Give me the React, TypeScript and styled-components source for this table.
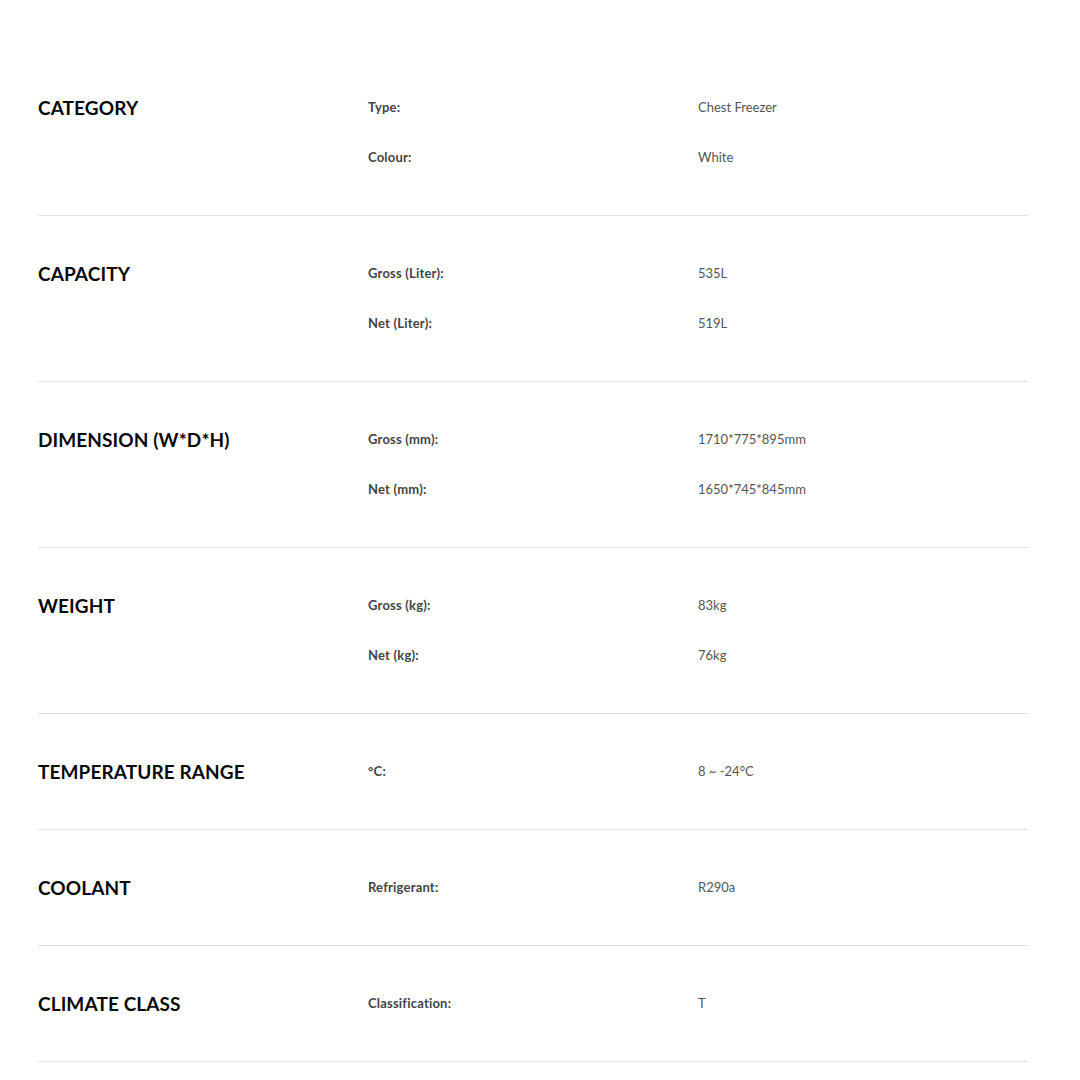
import React from "react";
import styled, { createGlobalStyle } from "styled-components";

const GlobalStyle = createGlobalStyle`
  html, body {
    margin: 0;
    padding: 0;
    background: #ffffff;
  }
  body {
    font-family: Lato, "Open Sans", sans-serif;
  }
`;

type Spec = { label: string; value: string };
type Group = { title: string; specs: Spec[] };

const groups: Group[] = [
  {
    title: "CATEGORY",
    specs: [
      { label: "Type:", value: "Chest Freezer" },
      { label: "Colour:", value: "White" },
    ],
  },
  {
    title: "CAPACITY",
    specs: [
      { label: "Gross (Liter):", value: "535L" },
      { label: "Net (Liter):", value: "519L" },
    ],
  },
  {
    title: "DIMENSION (W*D*H)",
    specs: [
      { label: "Gross (mm):", value: "1710*775*895mm" },
      { label: "Net (mm):", value: "1650*745*845mm" },
    ],
  },
  {
    title: "WEIGHT",
    specs: [
      { label: "Gross (kg):", value: "83kg" },
      { label: "Net (kg):", value: "76kg" },
    ],
  },
  {
    title: "TEMPERATURE RANGE",
    specs: [{ label: "°C:", value: "8 ~ -24°C" }],
  },
  {
    title: "COOLANT",
    specs: [{ label: "Refrigerant:", value: "R290a" }],
  },
  {
    title: "CLIMATE CLASS",
    specs: [{ label: "Classification:", value: "T" }],
  },
];

const App = () => {
  return (
    <Page>
      <GlobalStyle />
      <SpecTable>
        {groups.map((g) => (
          <Section key={g.title}>
            <SectionTitle>{g.title}</SectionTitle>
            <SpecList>
              {g.specs.map((s) => (
                <SpecRow key={s.label}>
                  <SpecLabel>{s.label}</SpecLabel>
                  <SpecValue>{s.value}</SpecValue>
                </SpecRow>
              ))}
            </SpecList>
          </Section>
        ))}
      </SpecTable>
    </Page>
  );
};

export default App;

const Page = styled.div`
  width: 1080px;
  padding: 50px 0 0 38px;
  box-sizing: border-box;
`;

const SpecTable = styled.div`
  width: 990px;
  display: flex;
  flex-direction: column;
`;

const Section = styled.div`
  display: grid;
  grid-template-columns: 330px 1fr;
  padding: 32px 0 33px;
  border-bottom: 1px solid #dde3e7;
`;

const SectionTitle = styled.h2`
  margin: 0;
  height: 50px;
  display: flex;
  align-items: center;
  font-family: Lato, sans-serif;
  font-weight: 700;
  font-size: 19px;
  letter-spacing: 0.1px;
  color: #0a0a0a;
`;

const SpecList = styled.div`
  display: flex;
  flex-direction: column;
`;

const SpecRow = styled.div`
  display: grid;
  grid-template-columns: 330px 1fr;
  height: 50px;
  align-items: center;
`;

const SpecLabel = styled.span`
  font-family: Lato, sans-serif;
  font-weight: 700;
  font-size: 13px;
  letter-spacing: 0.2px;
  color: #444444;
`;

const SpecValue = styled.span`
  font-family: Lato, sans-serif;
  font-weight: 400;
  font-size: 13px;
  color: #555555;
`;
